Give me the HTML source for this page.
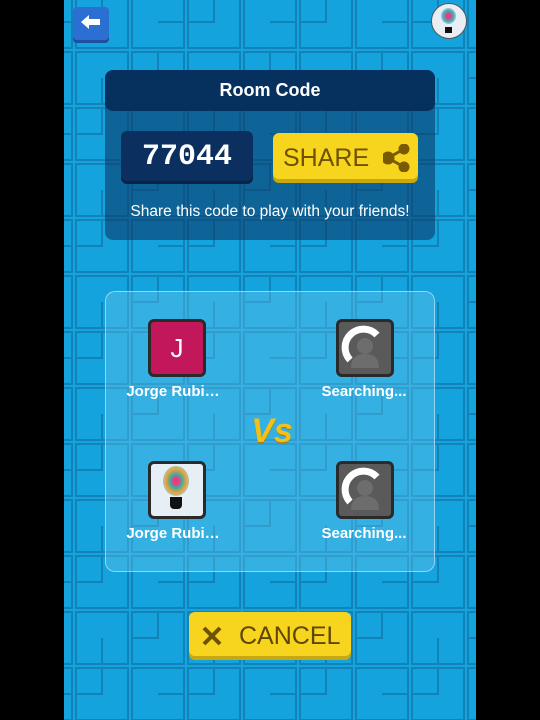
<!DOCTYPE html>
<html><head><style>
body{margin:0;width:540px;height:720px;background:#000;position:relative;overflow:hidden;font-family:"Liberation Sans",sans-serif}
#bg{position:absolute;left:64px;top:0;width:412px;height:720px;background:#14a3dc;overflow:hidden}
.abs{position:absolute}
.av{position:absolute;width:52px;height:52px;border:3px solid #2a2a2a;border-radius:6px}
.nm{position:absolute;color:#fff;font-weight:bold;font-size:15px;width:120px;text-align:center}
</style></head><body>
<div id="bg">
<svg width="412" height="720" style="position:absolute;left:0;top:0">
<defs><pattern id="p" width="112" height="112" patternUnits="userSpaceOnUse" x="10" y="-6">
<g fill="none" stroke="#1283b8" stroke-width="2">
<rect x="2" y="2" width="52" height="52"/><rect x="58" y="2" width="52" height="52"/>
<rect x="2" y="58" width="52" height="52"/><rect x="58" y="58" width="52" height="52"/>
<path d="M28 2V28H2M84 28H110M84 58V84H58M28 84V110"/>
</g></pattern></defs>
<rect width="412" height="720" fill="url(#p)"/>
</svg>
</div>
<!-- back -->
<div class="abs" style="left:73px;top:7px;width:36px;height:33px;background:#2c6fd2;border-radius:4px;box-shadow:0 3px 0 #1f4fa0"></div>
<svg class="abs" style="left:80px;top:13px" width="22" height="18"><path d="M1 9L9 2V6H20V12H9V16Z" fill="#fff"/></svg>
<!-- top right avatar -->
<div class="abs" style="left:431px;top:3px;width:34px;height:34px;border-radius:50%;background:#e8eef4;border:1px solid #555"></div>
<div class="abs" style="left:441px;top:8px;width:15px;height:16px;border-radius:50%;background:radial-gradient(#e04080 20%,#40b0c0 50%,#9cc 70%)"></div>
<div class="abs" style="left:445px;top:27px;width:7px;height:6px;background:#111"></div>
<!-- room panel -->
<div class="abs" style="left:105px;top:70px;width:330px;height:170px;background:rgba(10,50,95,0.55);border-radius:8px"></div>
<div class="abs" style="left:105px;top:70px;width:330px;height:41px;background:rgba(5,40,85,0.85);border-radius:8px;color:#fff;font-weight:bold;font-size:18px;text-align:center;line-height:41px">Room Code</div>
<div class="abs" style="left:121px;top:131px;width:132px;height:50px;background:#0b2f5f;border-radius:6px;box-shadow:0 3px 0 #082344;color:#fff;font-family:'Liberation Mono',monospace;font-weight:bold;font-size:30px;text-align:center;line-height:52px">77044</div>
<div class="abs" style="left:273px;top:133px;width:145px;height:46px;background:#f7d51e;border-radius:6px;box-shadow:0 4px 0 #c9a70e;color:#6d5200;font-size:25px;line-height:50px;padding-left:10px;box-sizing:border-box">SHARE</div>
<svg class="abs" style="left:383px;top:144px" width="28" height="28"><g fill="#7a5a00" stroke="#7a5a00" stroke-width="3"><circle cx="5" cy="14" r="5"/><circle cx="21" cy="5" r="4"/><circle cx="21" cy="23" r="4"/><path d="M5 14L21 5M5 14L21 23"/></g></svg>
<div class="abs" style="left:105px;top:203px;width:330px;text-align:center;color:#fff;font-size:15.5px">Share this code to play with your friends!</div>
<!-- players panel -->
<div class="abs" style="left:105px;top:291px;width:328px;height:279px;background:rgba(100,195,235,0.4);border:1px solid rgba(190,230,250,0.7);border-radius:10px"></div>
<div class="av" style="left:148px;top:319px;background:#c2185b;color:#fff;font-size:26px;text-align:center;line-height:52px">J</div>
<div class="av" style="left:336px;top:319px;background:#5a5a5a"></div>
<div class="av" style="left:148px;top:461px;background:#e6eef6"></div>
<div class="abs" style="left:163px;top:466px;width:26px;height:30px;border-radius:50%;background:radial-gradient(#e04080 15%,#40b0a0 35%,#f0a030 55%,#9cd 75%)"></div>
<div class="abs" style="left:170px;top:497px;width:12px;height:12px;background:#111;border-radius:0 0 4px 4px"></div>
<div class="av" style="left:336px;top:461px;background:#5a5a5a"></div>
<svg class="abs" style="left:339px;top:322px" width="52" height="52"><circle cx="26" cy="24" r="8" fill="#6d6d6d"/><path d="M12 46Q12 32 26 32Q40 32 40 46Z" fill="#6d6d6d"/><path d="M11 38A16 16 0 0 1 38 13" stroke="#fff" stroke-width="7" fill="none"/></svg>
<svg class="abs" style="left:339px;top:464px" width="52" height="52"><circle cx="26" cy="24" r="8" fill="#6d6d6d"/><path d="M12 46Q12 32 26 32Q40 32 40 46Z" fill="#6d6d6d"/><path d="M11 38A16 16 0 0 1 38 13" stroke="#fff" stroke-width="7" fill="none"/></svg>
<div class="nm" style="left:113px;top:383px">Jorge Rubi…</div>
<div class="nm" style="left:304px;top:383px">Searching...</div>
<div class="nm" style="left:113px;top:525px">Jorge Rubi…</div>
<div class="nm" style="left:304px;top:525px">Searching...</div>
<div class="abs" style="left:240px;top:412px;width:64px;text-align:center;font-size:34px;font-weight:bold;font-style:italic;color:#f2c01a;text-shadow:0 1px 0 #b07a00">Vs</div>
<!-- cancel -->
<div class="abs" style="left:189px;top:612px;width:162px;height:44px;background:#f7d51e;border-radius:6px;box-shadow:0 4px 0 #c9a70e;color:#5e4700;font-size:25px;line-height:48px;padding-left:50px;box-sizing:border-box">CANCEL</div>
<svg class="abs" style="left:201px;top:625px" width="22" height="22"><path d="M3 3L19 19M19 3L3 19" stroke="#6d5200" stroke-width="4"/></svg>
</body></html>
